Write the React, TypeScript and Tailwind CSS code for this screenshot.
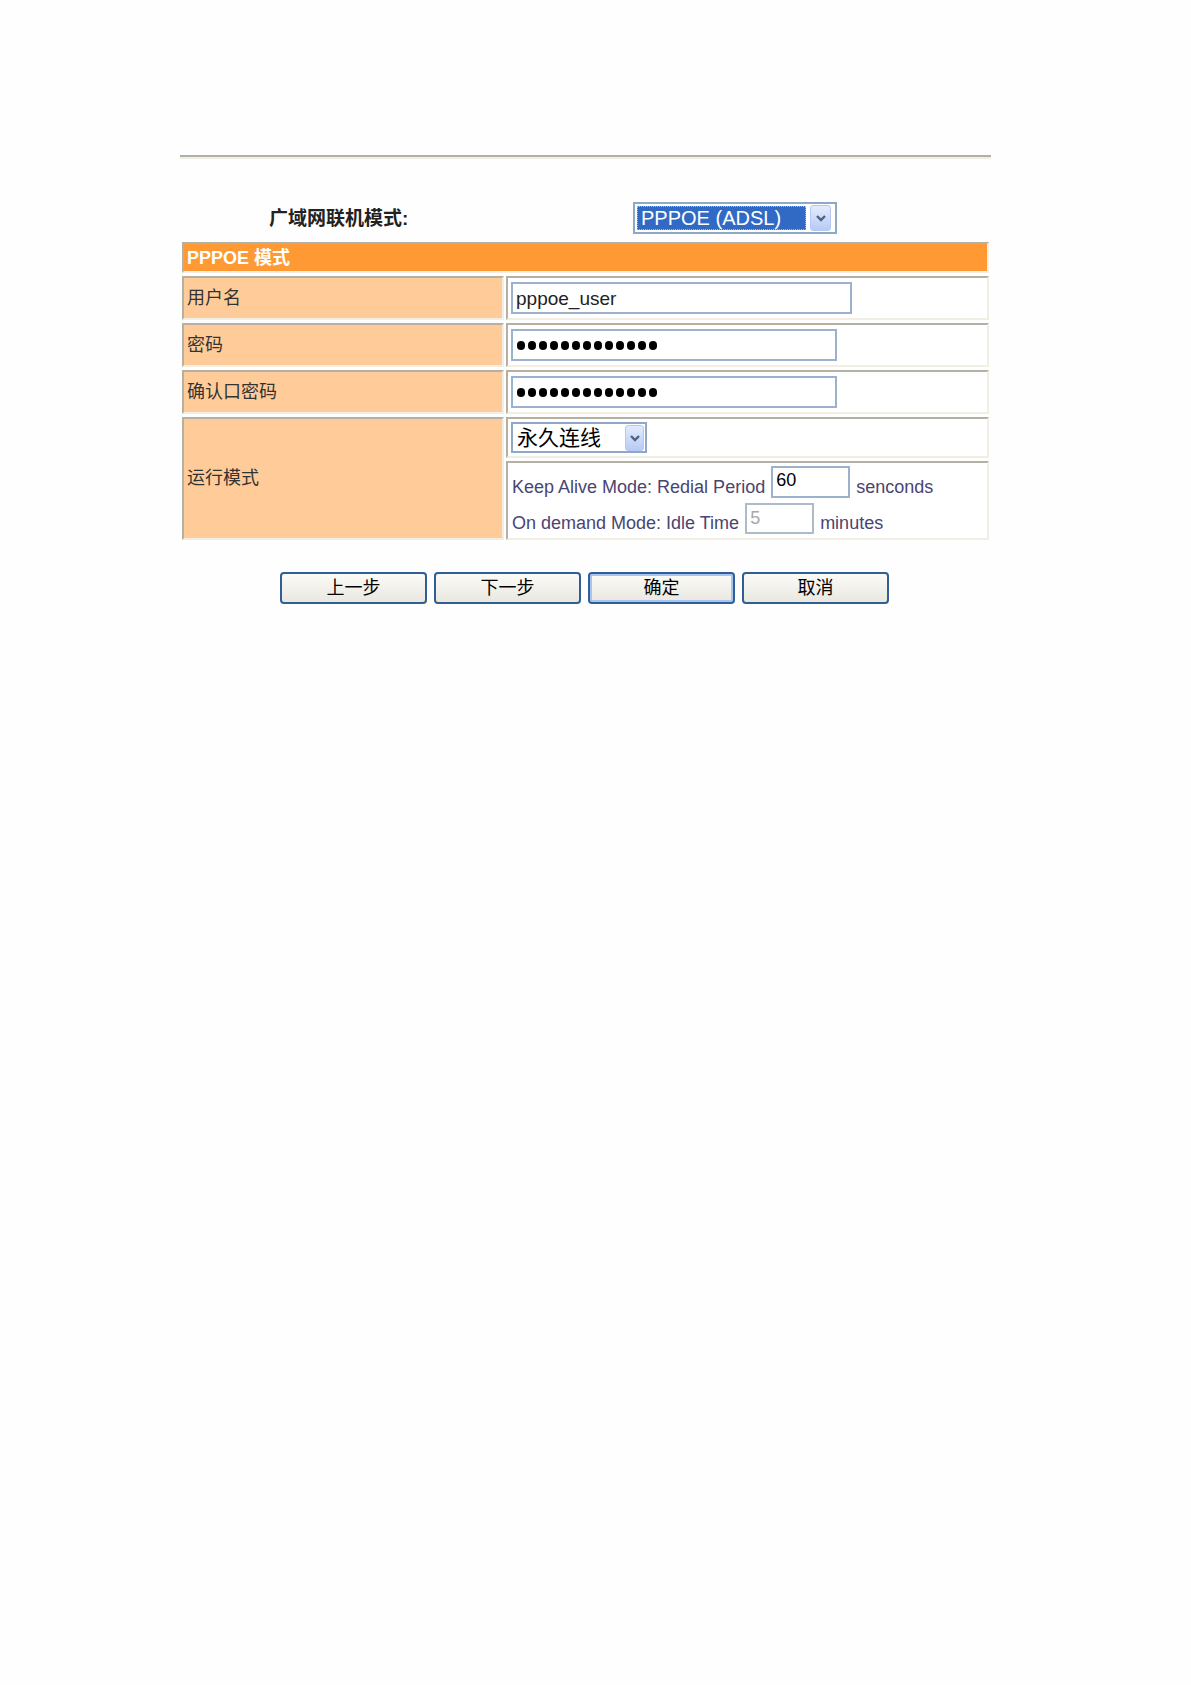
import React from "react";

const CELL =
  "border-2 border-t-[#b4b0a3] border-l-[#b4b0a3] border-b-[#f1efe4] border-r-[#f1efe4]";
const CJK = "font-['Liberation_Sans','Noto_Sans_CJK_SC',sans-serif]";

const Chevron = ({ className = "" }: { className?: string }) => (
  <div
    className={`flex items-center justify-center rounded-[3px] border border-[#b6c8f0] bg-gradient-to-b from-[#e3ebfd] to-[#b7cbf5] ${className}`}
  >
    <svg width="12" height="10" viewBox="0 0 12 10">
      <path d="M2 3 L6 7 L10 3" fill="none" stroke="#4d6185" strokeWidth="2.4" />
    </svg>
  </div>
);

const Dots = () => (
  <div className="flex h-[32px] w-[326px] items-center gap-[3px] border-2 border-[#9cb1cb] bg-white pl-[4px]">
    {Array.from({ length: 13 }).map((_, i) => (
      <span key={i} className="h-[9px] w-[8px] rounded-full bg-black" />
    ))}
  </div>
);

const Label = ({ children }: { children: React.ReactNode }) => (
  <div className={`${CELL} flex w-[322px] items-center bg-[#ffcc99] pl-[3px] text-[18px] text-[#333] ${CJK}`}>
    {children}
  </div>
);

export default function App() {
  return (
    <div className={`min-h-[1685px] w-full bg-[#fefefe] ${CJK}`}>
      <div className="ml-[180px] w-[811px] pt-[155px]">
        {/* divider */}
        <div className="h-0 border-t-2 border-b-2 border-t-[#b3afa3] border-b-[#efeee7]" />

        {/* WAN mode row */}
        <div className="mt-[43px] flex h-[32px] items-center">
          <div className="w-[453px] pl-[89px] pt-[2px] text-[19px] font-bold text-[#222]">广域网联机模式:</div>
          <div className="flex h-[32px] w-[204px] items-center gap-[4px] border-2 border-[#8fa8c6] bg-white p-[2px]">
            <div className="flex h-[24px] w-[169px] items-center border border-dotted border-[#d8b860] bg-[#316ac5] pl-[3px] text-[20px] leading-none text-white">
              PPPOE (ADSL)
            </div>
            <Chevron className="h-[26px] w-[21px]" />
          </div>
        </div>

        {/* table */}
        <div className="ml-[2px] mt-[8px] flex w-[807px] flex-col gap-[3px]">
          <div className={`${CELL} flex h-[31px] items-center bg-[#ff9933] pl-[3px] pt-[2px] text-[18px] font-bold text-white`}>
            PPPOE 模式
          </div>

          <div className="flex h-[44px] gap-[2px]">
            <Label>用户名</Label>
            <div className={`${CELL} flex flex-1 items-center bg-white pl-[3px]`}>
              <input
                readOnly
                value="pppoe_user"
                className="h-[32px] w-[341px] border-2 border-[#9cb1cb] bg-white pl-[3px] pt-[2px] text-[19px] text-[#222] outline-none"
              />
            </div>
          </div>

          <div className="flex h-[44px] gap-[2px]">
            <Label>密码</Label>
            <div className={`${CELL} flex flex-1 items-center bg-white pl-[3px]`}>
              <Dots />
            </div>
          </div>

          <div className="flex h-[44px] gap-[2px]">
            <Label>确认口密码</Label>
            <div className={`${CELL} flex flex-1 items-center bg-white pl-[3px]`}>
              <Dots />
            </div>
          </div>

          <div className="flex h-[123px] gap-[2px]">
            <Label>运行模式</Label>
            <div className="flex flex-1 flex-col gap-[3px]">
              <div className={`${CELL} flex h-[41px] items-center bg-white pl-[3px]`}>
                <div className="flex h-[31px] w-[136px] items-center justify-between border-2 border-[#8fa8c6] bg-white pl-[4px] pr-[1px]">
                  <span className="text-[21px] leading-none text-black">永久连线</span>
                  <Chevron className="h-[26px] w-[19px]" />
                </div>
              </div>
              <div className={`${CELL} flex h-[79px] flex-col gap-[5px] bg-white pl-[4px] pt-[3px] text-[18px] text-[#4a4472]`}>
                <div className="flex h-[32px] items-end gap-[6px]">
                  <span className="leading-[21px]">Keep Alive Mode: Redial Period</span>
                  <input
                    readOnly
                    value="60"
                    className="h-[32px] w-[79px] border-2 border-[#9cb1cb] bg-white pb-[3px] pl-[3px] text-[18px] text-black outline-none"
                  />
                  <span className="leading-[21px]">senconds</span>
                </div>
                <div className="flex h-[31px] items-end gap-[6px]">
                  <span className="leading-[21px]">On demand Mode: Idle Time</span>
                  <input
                    readOnly
                    value="5"
                    className="h-[31px] w-[69px] border-2 border-[#aebcca] bg-white pb-[1px] pl-[3px] text-[18px] text-[#a8a8a8] outline-none"
                  />
                  <span className="leading-[21px]">minutes</span>
                </div>
              </div>
            </div>
          </div>
        </div>

        {/* buttons */}
        <div className="ml-[100px] mt-[32px] flex gap-[7px]">
          {["上一步", "下一步", "确定", "取消"].map((t) => (
            <button
              key={t}
              className={`flex h-[32px] w-[147px] items-center justify-center rounded-[4px] border-2 border-[#2f5f94] bg-gradient-to-b from-[#fbfbf8] to-[#e9e7df] text-[18px] text-black ${
                t === "确定" ? "shadow-[inset_0_0_0_2px_#a9c4f2]" : ""
              }`}
            >
              {t}
            </button>
          ))}
        </div>
      </div>
    </div>
  );
}
